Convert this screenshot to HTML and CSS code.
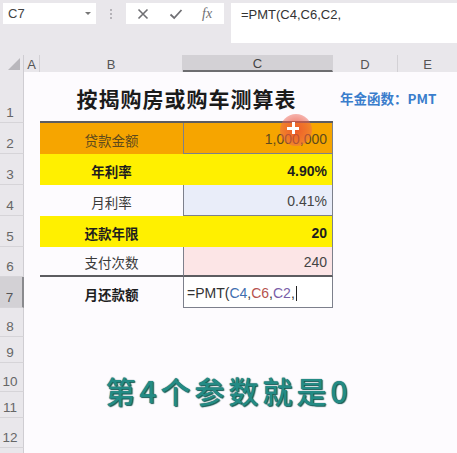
FILE: index.html
```html
<!DOCTYPE html>
<html>
<head>
<meta charset="utf-8">
<link rel="stylesheet" href="styles.css">
</head>
<body>
<div class="app">
  <div class="topbar">
    <div class="namebox"><span class="ref">C7</span><span class="dd"></span></div>
    <div class="grip"><i></i><i></i><i></i></div>
    <div class="iconbox">
      <svg class="ic" width="14" height="14" viewBox="0 0 14 14"><path d="M2.5 2.5L11.5 11.5M11.5 2.5L2.5 11.5" stroke="#6f6f73" stroke-width="1.6" fill="none"/></svg>
      <svg class="ic" width="14" height="14" viewBox="0 0 14 14"><path d="M1.5 7.5L5.2 11L12.5 3" stroke="#6f6f73" stroke-width="1.8" fill="none"/></svg>
      <span class="fx">fx</span>
    </div>
    <div class="formula">=PMT(C4,C6,C2,</div>
  </div>
  <div class="sheet">
    <div class="corner"><span class="tri"></span></div>
    <div class="ch">A</div>
    <div class="ch">B</div>
    <div class="ch sel">C</div>
    <div class="ch">D</div>
    <div class="ch last">E</div>

    <div class="rh">1</div><div class="cell"></div>
    <div class="title">按揭购房或购车测算表</div>
    <div class="note">年金函数：PMT</div>

    <div class="rh">2</div><div class="cell"></div>
    <div class="lbl orange brown">贷款金额</div>
    <div class="val orange brown box">1,000,000</div>
    <div class="cell span2"></div>

    <div class="rh">3</div><div class="cell"></div>
    <div class="lbl yellow b">年利率</div>
    <div class="val yellow b rb">4.90%</div>
    <div class="cell span2"></div>

    <div class="rh">4</div><div class="cell"></div>
    <div class="lbl">月利率</div>
    <div class="val blue box">0.41%</div>
    <div class="cell span2"></div>

    <div class="rh">5</div><div class="cell"></div>
    <div class="lbl yellow b">还款年限</div>
    <div class="val yellow b rb">20</div>
    <div class="cell span2"></div>

    <div class="rh">6</div><div class="cell"></div>
    <div class="lbl under">支付次数</div>
    <div class="val pink box under">240</div>
    <div class="cell span2"></div>

    <div class="rh sel">7</div><div class="cell"></div>
    <div class="lbl b">月还款额</div>
    <div class="val edit box">=PMT(<span class="r1">C4</span>,<span class="r2">C6</span>,<span class="r3">C2</span>,<span class="caret"></span></div>
    <div class="cell span2"></div>

    <div class="rh">8</div><div class="cell full"></div>
    <div class="rh">9</div><div class="cell full"></div>
    <div class="rh">10</div><div class="cell full"></div>
    <div class="rh">11</div><div class="cell full"></div>
    <div class="rh">12</div><div class="cell full"></div>
    <div class="rh"></div><div class="cell full"></div>
  </div>
  <div class="pointer"><span class="plus"></span></div>
  <div class="caption">第4个参数就是0</div>
</div>
</body>
</html>
```
FILE: styles.css
```css
html, body {
  margin: 0;
  padding: 0;
}
body {
  width: 457px;
  height: 453px;
  overflow: hidden;
  background: #fdfbfe;
  font-family: "Liberation Sans", "Noto Sans CJK SC", sans-serif;
}
.app {
  position: relative;
  width: 457px;
  height: 453px;
  overflow: hidden;
}
.topbar {
  height: 55px;
  background: #e9e7eb;
  display: flex;
  align-items: flex-start;
  padding: 3px 0 0 3px;
  box-sizing: border-box;
}
.namebox {
  width: 93px;
  height: 21px;
  background: #fff;
  display: flex;
  align-items: center;
  justify-content: space-between;
  padding: 0 5px 0 5px;
  box-sizing: border-box;
  font-size: 13px;
  color: #444;
}
.dd {
  width: 0;
  height: 0;
  border-left: 3px solid transparent;
  border-right: 3px solid transparent;
  border-top: 3px solid #777;
}
.grip {
  width: 30px;
  height: 21px;
  display: flex;
  flex-direction: column;
  align-items: center;
  justify-content: center;
  gap: 2px;
}
.grip i {
  width: 2px;
  height: 2px;
  background: #b5b3b8;
}
.iconbox {
  width: 98px;
  height: 21px;
  background: #fff;
  display: flex;
  align-items: center;
  padding-left: 10px;
  gap: 19px;
  box-sizing: border-box;
}
.fx {
  font-family: "Liberation Serif", serif;
  font-style: italic;
  font-size: 14px;
  color: #6f6f73;
}
.formula {
  margin-left: 7px;
  flex: 1;
  height: 40px;
  background: #fff;
  font-size: 13px;
  color: #333;
  padding: 4px 0 0 10px;
  box-sizing: border-box;
}
.sheet {
  display: grid;
  grid-template-columns: 24px 16px 143px 150px 65px 1fr;
  grid-template-rows: 17px 51px 31px 31px 31px 31px 30px 31px 29px 26px 29px 26px 30px 20px;
}
.corner {
  background: #e9e7eb;
  border-right: 1px solid #cfcdd2;
  position: relative;
}
.tri {
  position: absolute;
  right: 3px;
  bottom: 2px;
  width: 0;
  height: 0;
  border-left: 12px solid transparent;
  border-bottom: 12px solid #b9b7bc;
}
.ch {
  background: #e9e7eb;
  border-right: 1px solid #d3d1d5;
  display: flex;
  align-items: center;
  justify-content: center;
  font-size: 13px;
  color: #555;
  padding-top: 2px;
  box-sizing: border-box;
}
.ch.sel {
  background: #d3d1d5;
  border-bottom: 2px solid #6d6d70;
  color: #444;
}
.ch.last {
  border-right: none;
}
.rh {
  background: #e9e7eb;
  border-right: 1px solid #cfcdd2;
  border-bottom: 1px solid #d6d4d8;
  display: flex;
  align-items: flex-end;
  justify-content: center;
  padding: 0 3px 2px 0;
  box-sizing: border-box;
  font-size: 13.5px;
  color: #666;
}
.rh.sel {
  background: #d3d1d5;
  border-right: 2px solid #8a8a8e;
  color: #555;
}
.cell.span2 {
  grid-column: span 2;
}
.cell.full {
  grid-column: span 5;
}
.title {
  grid-column: span 2;
  display: flex;
  align-items: center;
  justify-content: center;
  font-family: "Noto Sans CJK SC", sans-serif;
  font-weight: 700;
  font-size: 21px;
  letter-spacing: 1px;
  color: #1b1b1b;
  border-bottom: 2px solid #5c5c60;
  box-sizing: border-box;
  padding-top: 2px;
}
.note {
  grid-column: span 2;
  display: flex;
  align-items: center;
  padding-left: 7px;
  font-family: "Noto Sans CJK SC", sans-serif;
  font-weight: 700;
  font-size: 13.5px;
  color: #3a7dcc;
}
.lbl {
  display: flex;
  align-items: center;
  justify-content: center;
  font-family: "Noto Sans CJK SC", sans-serif;
  font-size: 13.5px;
  color: #3a3a3a;
  box-sizing: border-box;
  padding-top: 2px;
}
.val {
  display: flex;
  align-items: center;
  justify-content: flex-end;
  padding: 2px 5px 0 0;
  box-sizing: border-box;
  font-size: 14px;
  color: #444;
}
.b {
  font-weight: 700;
  color: #1e1e1e;
}
.orange {
  background: #f6a500;
}
.brown {
  color: #5e4a1c;
}
.yellow {
  background: #fff000;
}
.blue {
  background: #e9edf9;
}
.pink {
  background: #fce5e6;
}
.box {
  border: 1px solid #7d808c;
  border-top: none;
}
.rb {
  border-right: 1px solid #7d808c;
}
.under {
  border-bottom: 2px solid #5c5c60;
}
.val.under {
  border-bottom: 2px solid #5c5c60;
}
.edit {
  justify-content: flex-start;
  padding-left: 3px;
  color: #333;
  background: #fff;
}
.r1 { color: #3f6fb0; }
.r2 { color: #b6524e; }
.r3 { color: #7a5ea8; }
.caret {
  display: inline-block;
  width: 1px;
  height: 15px;
  background: #222;
  margin-left: 1px;
}
.pointer {
  position: absolute;
  left: 280px;
  top: 114px;
  width: 32px;
  height: 32px;
  border-radius: 50%;
  background: radial-gradient(circle, rgba(236,80,50,0.85) 0%, rgba(236,90,70,0.6) 50%, rgba(240,130,130,0.3) 100%);
}
.plus {
  position: absolute;
  left: 7px;
  top: 8px;
  width: 12px;
  height: 12px;
  background:
    linear-gradient(#fff, #fff) center / 12px 3px no-repeat,
    linear-gradient(#fff, #fff) center / 3px 12px no-repeat;
}
.caption {
  position: absolute;
  left: 0;
  width: 457px;
  top: 370px;
  text-align: center;
  font-family: "Noto Sans CJK SC", sans-serif;
  font-weight: 500;
  font-size: 30px;
  letter-spacing: 4px;
  line-height: 40px;
  color: #248b85;
  text-shadow: 0 0 1px #0d4d49, 1px 1px 1px #1a5c58;
}
```
